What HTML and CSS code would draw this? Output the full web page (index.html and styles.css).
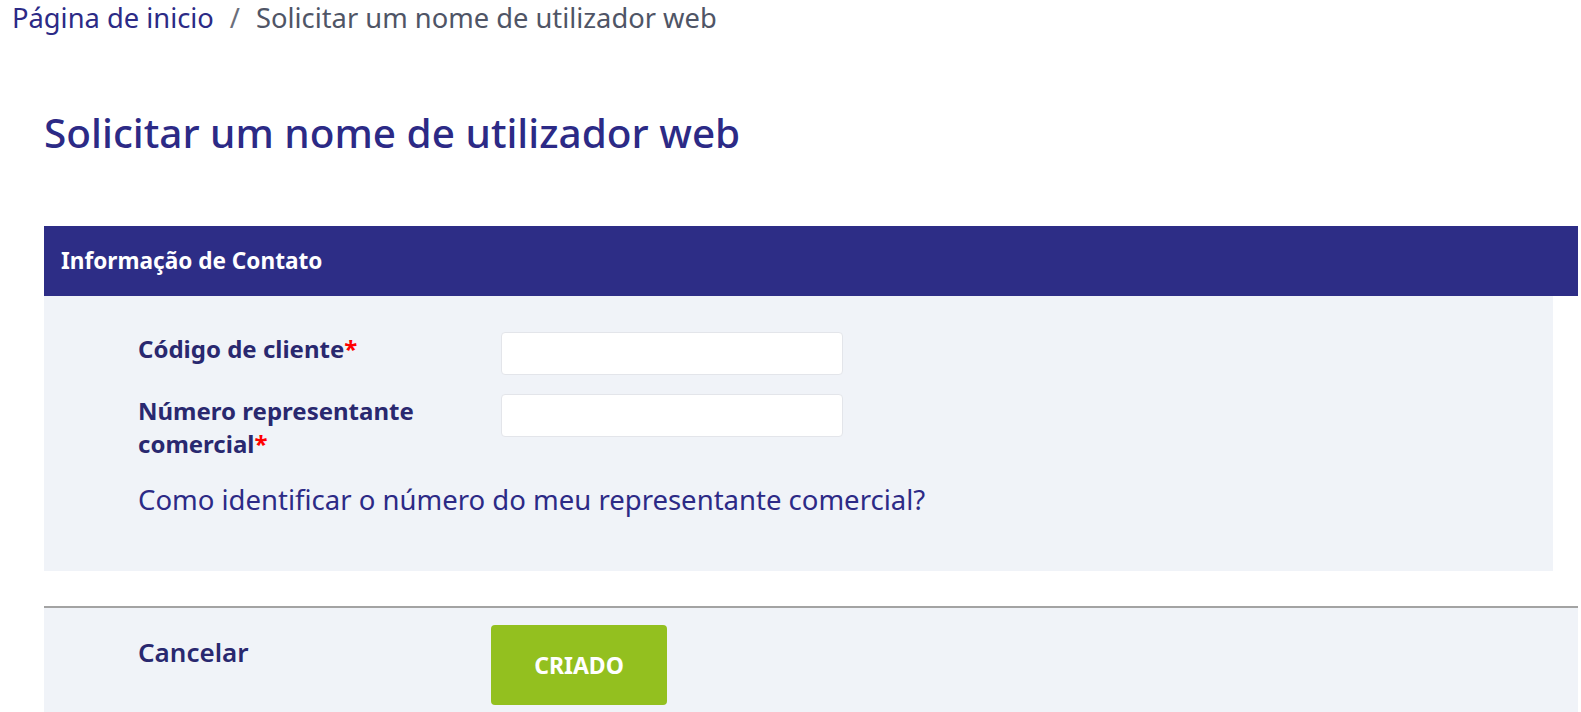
FILE: index.html
```html
<!DOCTYPE html>
<html lang="pt">
<head>
<meta charset="utf-8">
<title>Solicitar um nome de utilizador web</title>
<link rel="stylesheet" href="styles.css">
</head>
<body>
<nav class="breadcrumb">
  <a class="crumb-link" href="#">Página de inicio</a>
  <span class="crumb-sep">/</span>
  <span class="crumb-current">Solicitar um nome de utilizador web</span>
</nav>
<h1 class="page-title">Solicitar um nome de utilizador web</h1>
<section class="card">
  <div class="card-header">Informação de Contato</div>
  <div class="card-body">
    <div class="field-row">
      <label class="field-label" for="cliente">Código de cliente<span class="req">*</span></label>
      <input class="field-input" id="cliente" type="text">
    </div>
    <div class="field-row">
      <label class="field-label" for="rep">Número representante comercial<span class="req">*</span></label>
      <input class="field-input" id="rep" type="text">
    </div>
    <a class="help-link" href="#">Como identificar o número do meu representante comercial?</a>
  </div>
</section>
<div class="actions">
  <a class="cancel" href="#">Cancelar</a>
  <button class="submit" type="button">CRIADO</button>
</div>
</body>
</html>
```
FILE: styles.css
```css
* { box-sizing: border-box; }
html, body { margin: 0; padding: 0; background: #ffffff; }
body {
  font-family: "Noto Sans", "Open Sans", sans-serif;
  color: #2c2a86;
  overflow: hidden;
}
a { text-decoration: none; }

.breadcrumb {
  padding: 0 0 0 12px;
  height: 40px;
  font-size: 27.3px;
  line-height: 36px;
  display: flex;
  gap: 16px;
}
.crumb-link { color: #2c2a86; }
.crumb-sep { color: #6b6e7a; }
.crumb-current { color: #4f5566; }

.page-title {
  margin: 0;
  padding: 66px 0 0 44px;
  height: 186px;
  font-size: 40.5px;
  font-weight: 500;
  line-height: 54px;
  color: #2c2a86;
}

.card {
  margin: 0 3px 0 44px;
}
.card-header {
  height: 70px;
  background: #2d2d86;
  color: #ffffff;
  font-weight: 700;
  font-size: 22.6px;
  line-height: 70px;
  padding-left: 17px;
}
.card-body {
  width: 1509px;
  height: 275px;
  background: #f0f3f8;
  padding: 36px 0 0 94px;
  display: flex;
  flex-direction: column;
  gap: 19px;
}
.field-row {
  display: grid;
  grid-template-columns: 363px 342px;
  align-items: start;
}
.field-label {
  font-weight: 700;
  font-size: 24px;
  line-height: 33px;
  color: #29286f;
  width: 300px;
}
.req { color: #ff0000; }
.field-input {
  height: 43px;
  background: #ffffff;
  border: 1px solid #e3e5ea;
  border-radius: 4px;
  font: inherit;
}
.help-link {
  display: block;
  margin-top: 4px;
  font-size: 27.5px;
  line-height: 34px;
  color: #2c2a86;
}

.actions {
  margin: 35px 3px 0 44px;
  border-top: 2px solid #a3a3a3;
  background: #f0f3f8;
  height: 106px;
  padding: 17px 0 0 94px;
  display: flex;
  align-items: flex-start;
}
.cancel {
  width: 353px;
  font-size: 26px;
  font-weight: 600;
  line-height: 36px;
  padding-top: 9px;
  color: #29286f;
}
.submit {
  width: 176px;
  height: 80px;
  border: none;
  border-radius: 4px;
  background: #93c01f;
  color: #ffffff;
  font-family: inherit;
  font-weight: 700;
  font-size: 23px;
}
```
